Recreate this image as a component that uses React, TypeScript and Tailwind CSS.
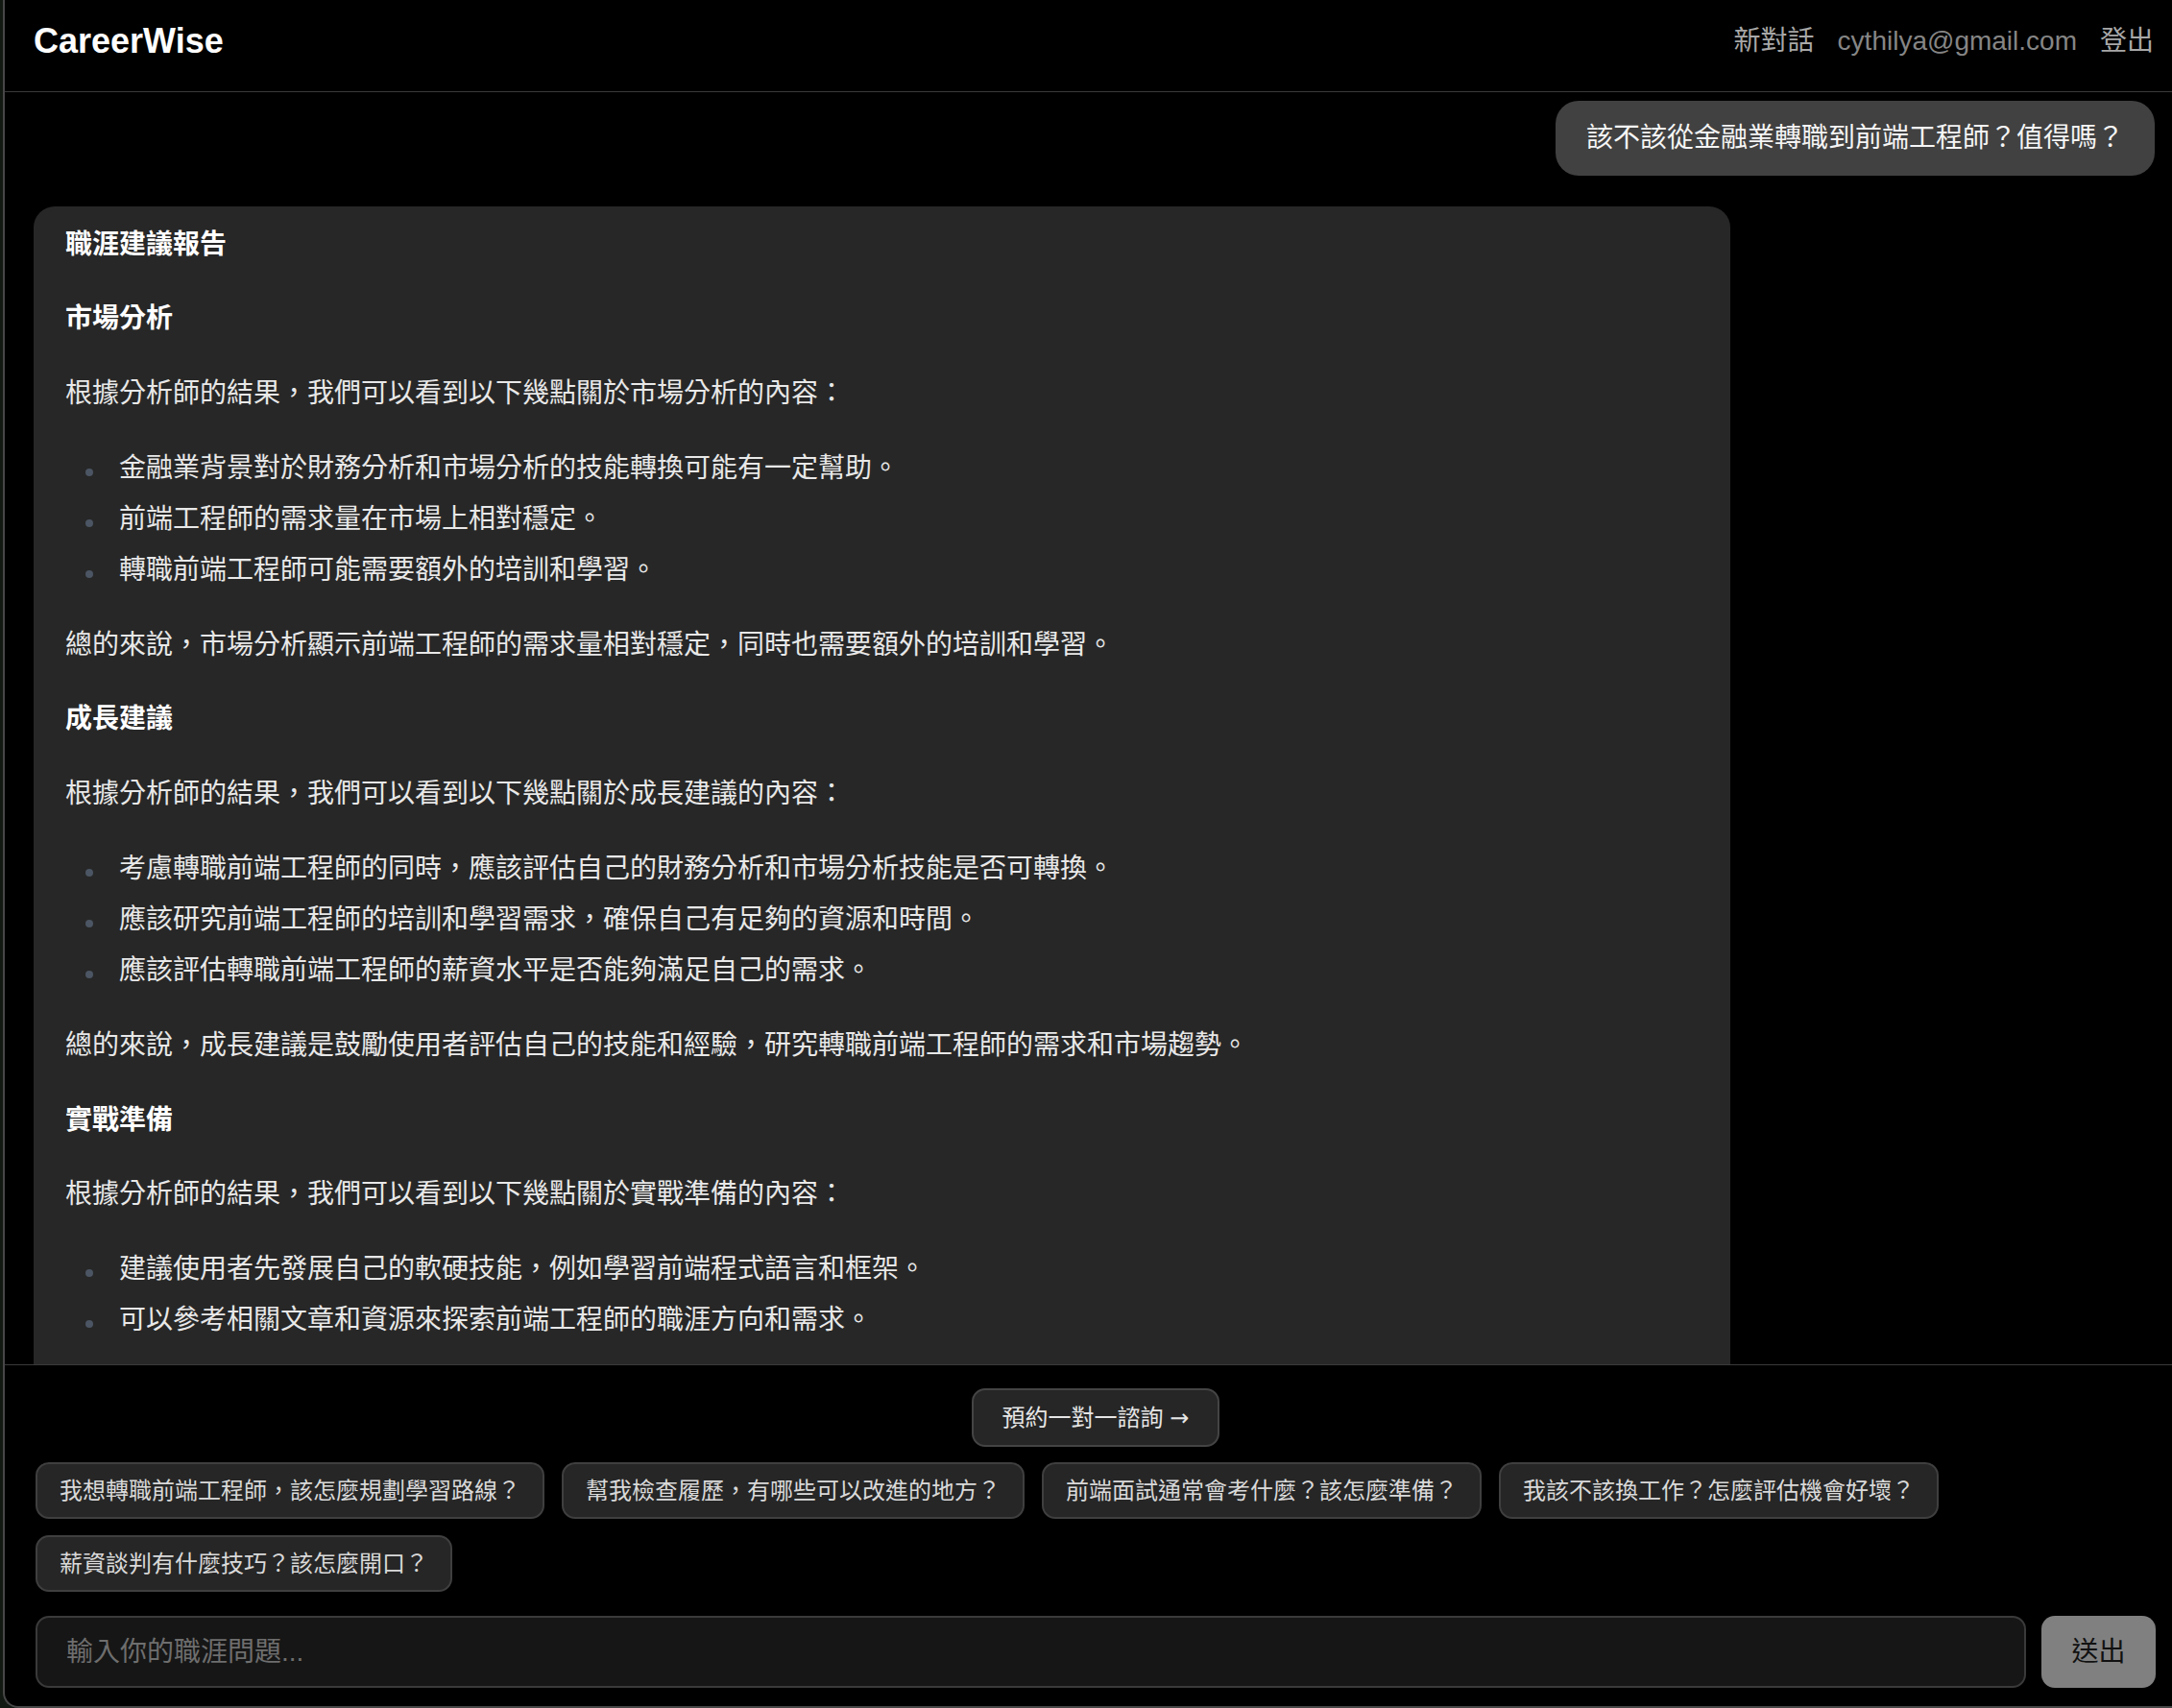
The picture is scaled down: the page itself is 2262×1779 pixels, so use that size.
const suggestions = [
  "我想轉職前端工程師，該怎麼規劃學習路線？",
  "幫我檢查履歷，有哪些可以改進的地方？",
  "前端面試通常會考什麼？該怎麼準備？",
  "我該不該換工作？怎麼評估機會好壞？",
  "薪資談判有什麼技巧？該怎麼開口？",
];

type Block =
  | { kind: "h"; text: string }
  | { kind: "p"; text: string }
  | { kind: "ul"; items: string[] };

const report: Block[] = [
  { kind: "h", text: "職涯建議報告" },
  { kind: "h", text: "市場分析" },
  { kind: "p", text: "根據分析師的結果，我們可以看到以下幾點關於市場分析的內容：" },
  {
    kind: "ul",
    items: [
      "金融業背景對於財務分析和市場分析的技能轉換可能有一定幫助。",
      "前端工程師的需求量在市場上相對穩定。",
      "轉職前端工程師可能需要額外的培訓和學習。",
    ],
  },
  { kind: "p", text: "總的來說，市場分析顯示前端工程師的需求量相對穩定，同時也需要額外的培訓和學習。" },
  { kind: "h", text: "成長建議" },
  { kind: "p", text: "根據分析師的結果，我們可以看到以下幾點關於成長建議的內容：" },
  {
    kind: "ul",
    items: [
      "考慮轉職前端工程師的同時，應該評估自己的財務分析和市場分析技能是否可轉換。",
      "應該研究前端工程師的培訓和學習需求，確保自己有足夠的資源和時間。",
      "應該評估轉職前端工程師的薪資水平是否能夠滿足自己的需求。",
    ],
  },
  { kind: "p", text: "總的來說，成長建議是鼓勵使用者評估自己的技能和經驗，研究轉職前端工程師的需求和市場趨勢。" },
  { kind: "h", text: "實戰準備" },
  { kind: "p", text: "根據分析師的結果，我們可以看到以下幾點關於實戰準備的內容：" },
  {
    kind: "ul",
    items: [
      "建議使用者先發展自己的軟硬技能，例如學習前端程式語言和框架。",
      "可以參考相關文章和資源來探索前端工程師的職涯方向和需求。",
    ],
  },
];

function ReportBlock({ block }: { block: Block }) {
  if (block.kind === "h") {
    return <h3 className="font-bold text-white">{block.text}</h3>;
  }
  if (block.kind === "p") {
    return <p>{block.text}</p>;
  }
  return (
    <ul className="flex flex-col gap-[8px]">
      {block.items.map((item) => (
        <li key={item} className="flex">
          <span className="flex w-[56px] shrink-0">
            <span className="ml-[21px] mt-[23px] h-[8px] w-[8px] rounded-full bg-[#4b5563]" />
          </span>
          <span>{item}</span>
        </li>
      ))}
    </ul>
  );
}

export default function App() {
  return (
    <div className="flex h-[1779px] w-full overflow-hidden bg-[#121812] font-['Liberation_Sans','Noto_Sans_CJK_TC',sans-serif]">
      {/* desktop strip left of the window */}
      <div className="w-[3px] shrink-0" />

      <div className="flex min-w-0 flex-1 flex-col overflow-hidden rounded-bl-[16px] border-b-2 border-l-2 border-[#474747] bg-black">
        {/* ── header ── */}
        <header className="flex h-[96px] shrink-0 items-center justify-between border-b border-[#3a3a3a] pb-[9px] pl-[30px] pr-[19px]">
          <span className="text-[36px] font-bold leading-[46px] text-white">CareerWise</span>
          <nav className="flex items-center gap-[24px] text-[28px] leading-[40px]">
            <span className="text-[#a8a8a8]">新對話</span>
            <span className="text-[#858585]">cythilya@gmail.com</span>
            <span className="text-[#a8a8a8]">登出</span>
          </nav>
        </header>

        {/* ── conversation ── */}
        <main className="flex min-h-0 flex-1 flex-col overflow-hidden pl-[30px] pr-[18px] pt-[9px]">
          <div className="self-end rounded-[24px] bg-[#414141] px-[32px] py-[18px] text-[28px] leading-[42px] text-[#f5f5f5]">
            該不該從金融業轉職到前端工程師？值得嗎？
          </div>

          <div className="mt-[32px] w-[80%] shrink-0 rounded-[22px] bg-[#272727] px-[33px] pb-[60px] pt-[16.5px] text-[28px] leading-[45px] text-[#e8e8e8]">
            <div className="flex flex-col gap-[32.8px]">
              {report.map((b, i) => (
                <ReportBlock key={i} block={b} />
              ))}
            </div>
          </div>
        </main>

        {/* ── composer ── */}
        <footer className="flex shrink-0 flex-col border-t border-[#3a3a3a] pb-[19px] pl-[32px] pr-[17px] pt-[24px]">
          <div className="flex justify-center">
            <button className="rounded-[14px] border-2 border-[#444] bg-[#262626] px-[30px] py-[11.5px] text-[24px] leading-[33px] text-[#e5e5e5]">
              預約一對一諮詢 <span className="font-['DejaVu_Sans',sans-serif]">→</span>
            </button>
          </div>

          <div className="mt-[16px] flex flex-wrap gap-x-[18px] gap-y-[17px]">
            {suggestions.map((s) => (
              <button
                key={s}
                className="rounded-[14px] border-2 border-[#3f3f3f] bg-[#262626] px-[23px] py-[11px] text-[24px] leading-[33px] text-[#d9d9d9]"
              >
                {s}
              </button>
            ))}
          </div>

          <div className="mt-[25px] flex gap-[16px]">
            <input
              className="h-[75px] min-w-0 flex-1 rounded-[14px] border-2 border-[#3a3a3a] bg-[#161616] px-[30px] text-[28px] text-white outline-none placeholder:text-[#6e6e6e]"
              placeholder="輸入你的職涯問題..."
            />
            <button className="h-[75px] w-[119px] shrink-0 rounded-[14px] bg-[#808080] text-[28px] text-[#111]">
              送出
            </button>
          </div>
        </footer>
      </div>
    </div>
  );
}
